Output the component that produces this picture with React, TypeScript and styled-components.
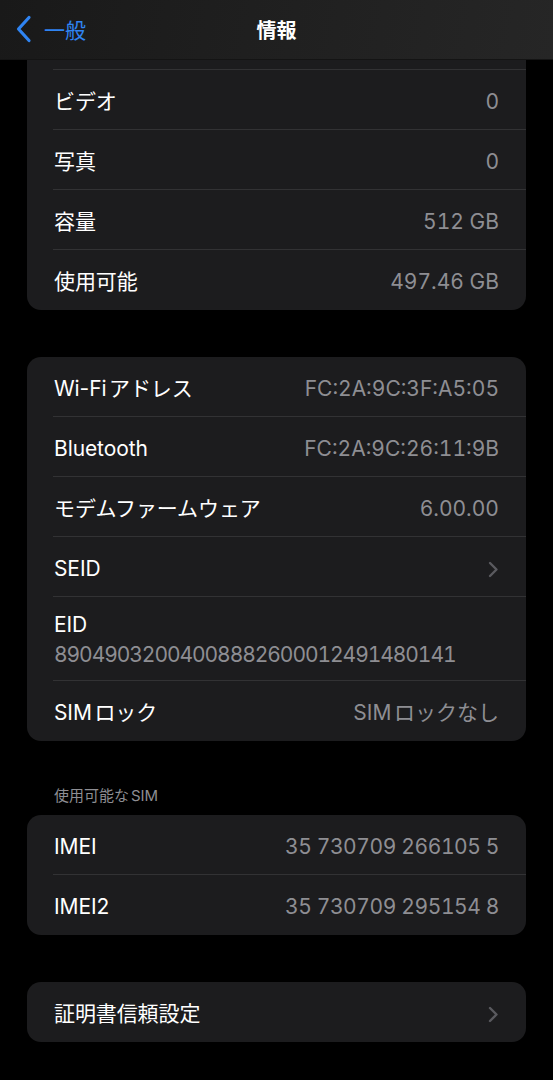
import { styled, createGlobalStyle } from 'styled-components';

const GlobalStyle = createGlobalStyle`
  html, body {
    margin: 0;
    padding: 0;
    background: #000000;
  }
  body {
    font-family: Inter, "Noto Sans CJK JP", sans-serif;
    -webkit-font-smoothing: antialiased;
    text-autospace: normal;
  }
`;

type Item = {
  label: string;
  value?: string;
  chevron?: boolean;
  stacked?: boolean;
};

const mediaRows: Item[] = [
  { label: 'ビデオ', value: '0' },
  { label: '写真', value: '0' },
  { label: '容量', value: '512 GB' },
  { label: '使用可能', value: '497.46 GB' },
];

const networkRows: Item[] = [
  { label: 'Wi-Fiアドレス', value: 'FC:2A:9C:3F:A5:05' },
  { label: 'Bluetooth', value: 'FC:2A:9C:26:11:9B' },
  { label: 'モデムファームウェア', value: '6.00.00' },
  { label: 'SEID', chevron: true },
  { label: 'EID', value: '89049032004008882600012491480141', stacked: true },
  { label: 'SIMロック', value: 'SIMロックなし' },
];

const simRows: Item[] = [
  { label: 'IMEI', value: '35 730709 266105 5' },
  { label: 'IMEI2', value: '35 730709 295154 8' },
];

const certRows: Item[] = [{ label: '証明書信頼設定', chevron: true }];

const Chevron = () => (
  <svg width="11" height="17" viewBox="0 0 11 17">
    <path
      d="M2 2 L8.5 8.5 L2 15"
      fill="none"
      stroke="#5a5a5f"
      strokeWidth="2.4"
      strokeLinecap="round"
      strokeLinejoin="round"
    />
  </svg>
);

const BackChevron = () => (
  <svg width="16" height="28" viewBox="0 0 16 28">
    <path
      d="M13 2.5 L2.5 14 L13 25.5"
      fill="none"
      stroke="#2f84f2"
      strokeWidth="3.2"
      strokeLinecap="round"
      strokeLinejoin="round"
    />
  </svg>
);

// scrolled list: the first group continues under the nav bar
const Group = ({ rows, clipped }: { rows: Item[]; clipped?: boolean }) => (
  <Card $clipped={clipped}>
    {clipped && <ScrollEdge />}
    {rows.map((row) =>
      row.stacked ? (
        <StackedRow key={row.label}>
          <Label>{row.label}</Label>
          <StackedValue>{row.value}</StackedValue>
        </StackedRow>
      ) : (
        <Row key={row.label}>
          <Label>{row.label}</Label>
          {row.value && <Value $tight={row.value.startsWith('35')}>{row.value}</Value>}
          {row.chevron && <Chevron />}
        </Row>
      ),
    )}
  </Card>
);

const App = () => {
  return (
    <>
      <GlobalStyle />
      <NavBar>
        <BackButton>
          <BackChevron />
          <BackText>一般</BackText>
        </BackButton>
        <NavTitle>情報</NavTitle>
      </NavBar>
      <Page>
        <Group rows={mediaRows} clipped />
        <Group rows={networkRows} />
        <SectionHeader>使用可能なSIM</SectionHeader>
        <Group rows={simRows} />
        <Group rows={certRows} />
      </Page>
    </>
  );
};

export default App;

const NavBar = styled.header`
  position: fixed;
  top: 0;
  left: 0;
  right: 0;
  height: 59px;
  z-index: 10;
  display: flex;
  align-items: center;
  justify-content: center;
  background: linear-gradient(100deg, #191919 0%, #1f1f1f 45%, #262626 100%);
  border-bottom: 1px solid #141414;
`;

const BackButton = styled.div`
  position: absolute;
  left: 16px;
  top: 15px;
  display: flex;
  align-items: center;
  gap: 12px;
`;

const BackText = styled.span`
  color: #2f84f2;
  font-size: 21px;
  font-family: "Noto Sans CJK JP", sans-serif;
  line-height: 28px;
`;

const NavTitle = styled.h1`
  margin: 0;
  color: #ffffff;
  font-size: 20px;
  font-weight: 600;
  font-family: "Noto Sans CJK JP", sans-serif;
  line-height: 28px;
`;

const Page = styled.main`
  display: flex;
  flex-direction: column;
  gap: 47px;
  padding: 60px 27px 40px;
`;

const Card = styled.section<{ $clipped?: boolean }>`
  background: #1c1c1e;
  border-radius: ${({ $clipped }) => ($clipped ? '0 0 14px 14px' : '14px')};
  overflow: hidden;
`;

const ScrollEdge = styled.div`
  height: 10px;
  margin-left: 26px;
  box-sizing: border-box;
  border-bottom: 1px solid #323234;
`;

const Row = styled.div`
  position: relative;
  height: 60px;
  display: flex;
  align-items: center;
  justify-content: space-between;
  padding: 4px 27px 0;
  box-sizing: border-box;

  &:not(:last-child)::after {
    content: '';
    position: absolute;
    left: 26px;
    right: 0;
    bottom: 0;
    height: 1px;
    background: #323234;
  }
`;

const StackedRow = styled(Row)`
  height: 84px;
  flex-direction: column;
  align-items: flex-start;
  justify-content: flex-start;
  padding-top: 16px;
  gap: 6px;
`;

const Label = styled.span`
  color: #ffffff;
  font-size: 21px;
  line-height: 24px;
  letter-spacing: -0.1px;
`;

const Value = styled.span<{ $tight?: boolean }>`
  color: #8e8e93;
  font-size: 21px;
  line-height: 24px;
  font-variant-numeric: tabular-nums;
  letter-spacing: ${({ $tight }) => ($tight ? '-0.4px' : '0')};
`;

const StackedValue = styled(Value)`
  letter-spacing: -1.07px;
`;

const SectionHeader = styled.h2`
  margin: -2px 0 -38px 27px;
  color: #8e8e93;
  font-size: 15px;
  font-weight: 400;
  line-height: 20px;
`;
